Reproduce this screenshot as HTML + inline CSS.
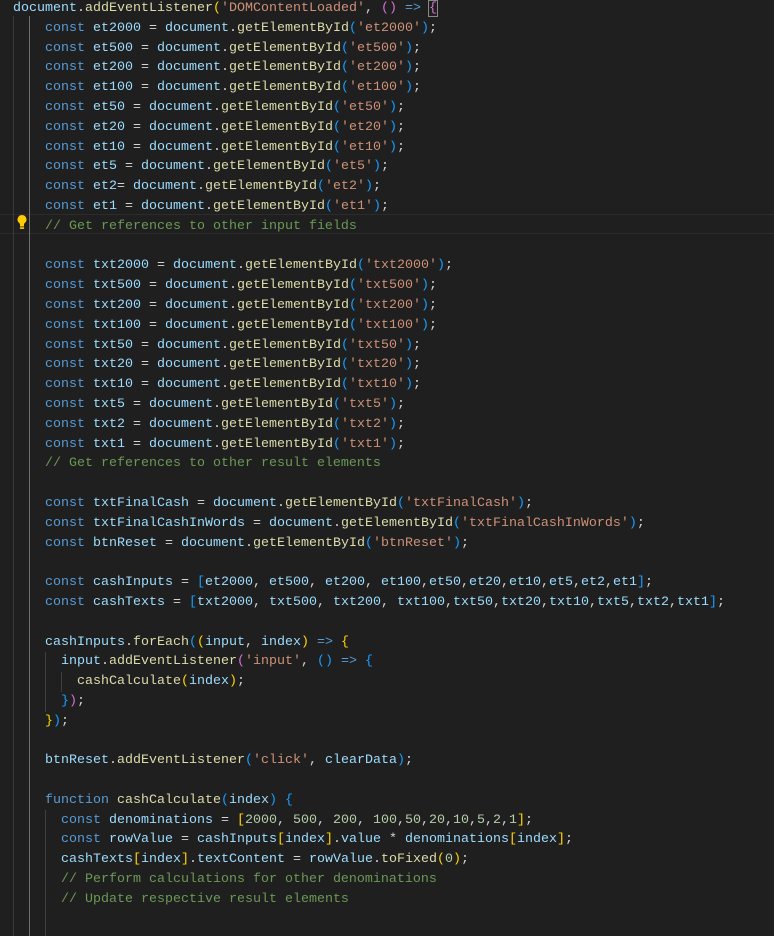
<!DOCTYPE html>
<html><head><meta charset="utf-8"><style>
html,body{margin:0;padding:0;background:#1f1f1f;width:774px;height:936px;overflow:hidden}
#code{position:absolute;left:13px;top:-1px;font-family:"Liberation Mono",monospace;font-size:13.33px;line-height:19.8px;white-space:pre;color:#d4d4d4}
.k{color:#569cd6}.v{color:#9cdcfe}.f{color:#dcdcaa}.s{color:#ce9178}.c{color:#6a9955}.n{color:#b5cea8}
.b1{color:#ffd700}.b2{color:#da70d6}.b3{color:#179fff}
.g{position:absolute;width:1px;background:#404040}
.hl{position:absolute;left:0;width:774px;top:214px;height:20px;border-top:1px solid #2c2c2c;border-bottom:1px solid #2c2c2c;box-sizing:border-box}
.box{outline:1px solid #888;}
</style></head><body>
<div class="hl"></div>
<div class="g" style="left:13px;top:16px;height:920px;background:#3a3a3a"></div>
<div class="g" style="left:29px;top:16px;height:920px;background:#707070"></div>
<div class="g" style="left:45px;top:652px;height:60px"></div>
<div class="g" style="left:61px;top:672px;height:20px"></div>
<div class="g" style="left:45px;top:810px;height:126px"></div>
<svg style="position:absolute;left:16px;top:214px" width="12" height="16" viewBox="0 0 12 16"><path d="M6 1a4.5 4.5 0 0 0-2.8 8c.6.5.8 1 .8 1.8V12h4v-1.2c0-.8.2-1.3.8-1.8A4.5 4.5 0 0 0 6 1z" fill="#ffcc00"/><rect x="4" y="12.5" width="4" height="2.5" fill="#ffcc00"/><rect x="3.6" y="13.4" width="4.8" height="0.8" fill="#a08000"/></svg>
<div id="code"><span class="v">document</span>.<span class="f">addEventListener</span><span class="b1">(</span><span class="s">'DOMContentLoaded'</span>, <span class="b2">()</span> <span class="k">=&gt;</span> <span class="b2 box">{</span>
    <span class="k">const</span> <span class="v">et2000</span> = <span class="v">document</span>.<span class="f">getElementById</span><span class="b3">(</span><span class="s">'et2000'</span><span class="b3">)</span>;
    <span class="k">const</span> <span class="v">et500</span> = <span class="v">document</span>.<span class="f">getElementById</span><span class="b3">(</span><span class="s">'et500'</span><span class="b3">)</span>;
    <span class="k">const</span> <span class="v">et200</span> = <span class="v">document</span>.<span class="f">getElementById</span><span class="b3">(</span><span class="s">'et200'</span><span class="b3">)</span>;
    <span class="k">const</span> <span class="v">et100</span> = <span class="v">document</span>.<span class="f">getElementById</span><span class="b3">(</span><span class="s">'et100'</span><span class="b3">)</span>;
    <span class="k">const</span> <span class="v">et50</span> = <span class="v">document</span>.<span class="f">getElementById</span><span class="b3">(</span><span class="s">'et50'</span><span class="b3">)</span>;
    <span class="k">const</span> <span class="v">et20</span> = <span class="v">document</span>.<span class="f">getElementById</span><span class="b3">(</span><span class="s">'et20'</span><span class="b3">)</span>;
    <span class="k">const</span> <span class="v">et10</span> = <span class="v">document</span>.<span class="f">getElementById</span><span class="b3">(</span><span class="s">'et10'</span><span class="b3">)</span>;
    <span class="k">const</span> <span class="v">et5</span> = <span class="v">document</span>.<span class="f">getElementById</span><span class="b3">(</span><span class="s">'et5'</span><span class="b3">)</span>;
    <span class="k">const</span> <span class="v">et2</span>= <span class="v">document</span>.<span class="f">getElementById</span><span class="b3">(</span><span class="s">'et2'</span><span class="b3">)</span>;
    <span class="k">const</span> <span class="v">et1</span> = <span class="v">document</span>.<span class="f">getElementById</span><span class="b3">(</span><span class="s">'et1'</span><span class="b3">)</span>;
    <span class="c">// Get references to other input fields</span>

    <span class="k">const</span> <span class="v">txt2000</span> = <span class="v">document</span>.<span class="f">getElementById</span><span class="b3">(</span><span class="s">'txt2000'</span><span class="b3">)</span>;
    <span class="k">const</span> <span class="v">txt500</span> = <span class="v">document</span>.<span class="f">getElementById</span><span class="b3">(</span><span class="s">'txt500'</span><span class="b3">)</span>;
    <span class="k">const</span> <span class="v">txt200</span> = <span class="v">document</span>.<span class="f">getElementById</span><span class="b3">(</span><span class="s">'txt200'</span><span class="b3">)</span>;
    <span class="k">const</span> <span class="v">txt100</span> = <span class="v">document</span>.<span class="f">getElementById</span><span class="b3">(</span><span class="s">'txt100'</span><span class="b3">)</span>;
    <span class="k">const</span> <span class="v">txt50</span> = <span class="v">document</span>.<span class="f">getElementById</span><span class="b3">(</span><span class="s">'txt50'</span><span class="b3">)</span>;
    <span class="k">const</span> <span class="v">txt20</span> = <span class="v">document</span>.<span class="f">getElementById</span><span class="b3">(</span><span class="s">'txt20'</span><span class="b3">)</span>;
    <span class="k">const</span> <span class="v">txt10</span> = <span class="v">document</span>.<span class="f">getElementById</span><span class="b3">(</span><span class="s">'txt10'</span><span class="b3">)</span>;
    <span class="k">const</span> <span class="v">txt5</span> = <span class="v">document</span>.<span class="f">getElementById</span><span class="b3">(</span><span class="s">'txt5'</span><span class="b3">)</span>;
    <span class="k">const</span> <span class="v">txt2</span> = <span class="v">document</span>.<span class="f">getElementById</span><span class="b3">(</span><span class="s">'txt2'</span><span class="b3">)</span>;
    <span class="k">const</span> <span class="v">txt1</span> = <span class="v">document</span>.<span class="f">getElementById</span><span class="b3">(</span><span class="s">'txt1'</span><span class="b3">)</span>;
    <span class="c">// Get references to other result elements</span>

    <span class="k">const</span> <span class="v">txtFinalCash</span> = <span class="v">document</span>.<span class="f">getElementById</span><span class="b3">(</span><span class="s">'txtFinalCash'</span><span class="b3">)</span>;
    <span class="k">const</span> <span class="v">txtFinalCashInWords</span> = <span class="v">document</span>.<span class="f">getElementById</span><span class="b3">(</span><span class="s">'txtFinalCashInWords'</span><span class="b3">)</span>;
    <span class="k">const</span> <span class="v">btnReset</span> = <span class="v">document</span>.<span class="f">getElementById</span><span class="b3">(</span><span class="s">'btnReset'</span><span class="b3">)</span>;

    <span class="k">const</span> <span class="v">cashInputs</span> = <span class="b3">[</span><span class="v">et2000</span>, <span class="v">et500</span>, <span class="v">et200</span>, <span class="v">et100</span>,<span class="v">et50</span>,<span class="v">et20</span>,<span class="v">et10</span>,<span class="v">et5</span>,<span class="v">et2</span>,<span class="v">et1</span><span class="b3">]</span>;
    <span class="k">const</span> <span class="v">cashTexts</span> = <span class="b3">[</span><span class="v">txt2000</span>, <span class="v">txt500</span>, <span class="v">txt200</span>, <span class="v">txt100</span>,<span class="v">txt50</span>,<span class="v">txt20</span>,<span class="v">txt10</span>,<span class="v">txt5</span>,<span class="v">txt2</span>,<span class="v">txt1</span><span class="b3">]</span>;

    <span class="v">cashInputs</span>.<span class="f">forEach</span><span class="b3">(</span><span class="b1">(</span><span class="v">input</span>, <span class="v">index</span><span class="b1">)</span> <span class="k">=&gt;</span> <span class="b1">{</span>
      <span class="v">input</span>.<span class="f">addEventListener</span><span class="b2">(</span><span class="s">'input'</span>, <span class="b3">()</span> <span class="k">=&gt;</span> <span class="b3">{</span>
        <span class="f">cashCalculate</span><span class="b1">(</span><span class="v">index</span><span class="b1">)</span>;
      <span class="b3">}</span><span class="b2">)</span>;
    <span class="b1">}</span><span class="b3">)</span>;

    <span class="v">btnReset</span>.<span class="f">addEventListener</span><span class="b3">(</span><span class="s">'click'</span>, <span class="v">clearData</span><span class="b3">)</span>;

    <span class="k">function</span> <span class="f">cashCalculate</span><span class="b3">(</span><span class="v">index</span><span class="b3">)</span> <span class="b3">{</span>
      <span class="k">const</span> <span class="v">denominations</span> = <span class="b1">[</span><span class="n">2000</span>, <span class="n">500</span>, <span class="n">200</span>, <span class="n">100</span>,<span class="n">50</span>,<span class="n">20</span>,<span class="n">10</span>,<span class="n">5</span>,<span class="n">2</span>,<span class="n">1</span><span class="b1">]</span>;
      <span class="k">const</span> <span class="v">rowValue</span> = <span class="v">cashInputs</span><span class="b1">[</span><span class="v">index</span><span class="b1">]</span>.<span class="v">value</span> * <span class="v">denominations</span><span class="b1">[</span><span class="v">index</span><span class="b1">]</span>;
      <span class="v">cashTexts</span><span class="b1">[</span><span class="v">index</span><span class="b1">]</span>.<span class="v">textContent</span> = <span class="v">rowValue</span>.<span class="f">toFixed</span><span class="b1">(</span><span class="n">0</span><span class="b1">)</span>;
      <span class="c">// Perform calculations for other denominations</span>
      <span class="c">// Update respective result elements</span>
</div>
</body></html>
